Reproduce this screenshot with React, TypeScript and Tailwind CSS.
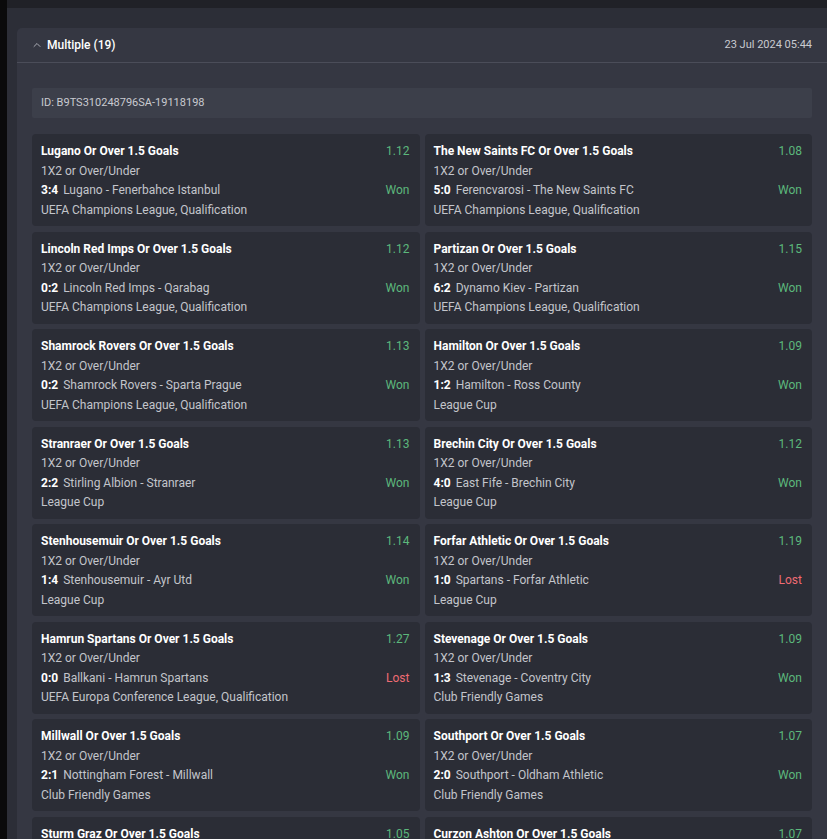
import { ChevronUp } from "lucide-react";

type Sel = {
  title: string;
  odds: string;
  score: string;
  match: string;
  league: string;
  won: boolean;
};

const UCL = "UEFA Champions League, Qualification";

const selections: Sel[] = [
  { title: "Lugano Or Over 1.5 Goals", odds: "1.12", score: "3:4", match: "Lugano - Fenerbahce Istanbul", league: UCL, won: true },
  { title: "The New Saints FC Or Over 1.5 Goals", odds: "1.08", score: "5:0", match: "Ferencvarosi - The New Saints FC", league: UCL, won: true },
  { title: "Lincoln Red Imps Or Over 1.5 Goals", odds: "1.12", score: "0:2", match: "Lincoln Red Imps - Qarabag", league: UCL, won: true },
  { title: "Partizan Or Over 1.5 Goals", odds: "1.15", score: "6:2", match: "Dynamo Kiev - Partizan", league: UCL, won: true },
  { title: "Shamrock Rovers Or Over 1.5 Goals", odds: "1.13", score: "0:2", match: "Shamrock Rovers - Sparta Prague", league: UCL, won: true },
  { title: "Hamilton Or Over 1.5 Goals", odds: "1.09", score: "1:2", match: "Hamilton - Ross County", league: "League Cup", won: true },
  { title: "Stranraer Or Over 1.5 Goals", odds: "1.13", score: "2:2", match: "Stirling Albion - Stranraer", league: "League Cup", won: true },
  { title: "Brechin City Or Over 1.5 Goals", odds: "1.12", score: "4:0", match: "East Fife - Brechin City", league: "League Cup", won: true },
  { title: "Stenhousemuir Or Over 1.5 Goals", odds: "1.14", score: "1:4", match: "Stenhousemuir - Ayr Utd", league: "League Cup", won: true },
  { title: "Forfar Athletic Or Over 1.5 Goals", odds: "1.19", score: "1:0", match: "Spartans - Forfar Athletic", league: "League Cup", won: false },
  { title: "Hamrun Spartans Or Over 1.5 Goals", odds: "1.27", score: "0:0", match: "Ballkani - Hamrun Spartans", league: "UEFA Europa Conference League, Qualification", won: false },
  { title: "Stevenage Or Over 1.5 Goals", odds: "1.09", score: "1:3", match: "Stevenage - Coventry City", league: "Club Friendly Games", won: true },
  { title: "Millwall Or Over 1.5 Goals", odds: "1.09", score: "2:1", match: "Nottingham Forest - Millwall", league: "Club Friendly Games", won: true },
  { title: "Southport Or Over 1.5 Goals", odds: "1.07", score: "2:0", match: "Southport - Oldham Athletic", league: "Club Friendly Games", won: true },
  { title: "Sturm Graz Or Over 1.5 Goals", odds: "1.05", score: "3:1", match: "Sturm Graz - Grazer AK", league: "Club Friendly Games", won: true },
  { title: "Curzon Ashton Or Over 1.5 Goals", odds: "1.07", score: "2:1", match: "Curzon Ashton - Buxton", league: "Club Friendly Games", won: true },
  { title: "Alfreton Town Or Over 1.5 Goals", odds: "1.08", score: "1:1", match: "Alfreton Town - Mansfield Town", league: "Club Friendly Games", won: true },
  { title: "Gateshead Or Over 1.5 Goals", odds: "1.06", score: "3:0", match: "Gateshead - Blyth Spartans", league: "Club Friendly Games", won: true },
  { title: "Woking Or Over 1.5 Goals", odds: "1.10", score: "2:2", match: "Woking - Crawley Town", league: "Club Friendly Games", won: true },
];

const SelectionCard = ({ s }: { s: Sel }) => (
  <div className="rounded-[4px] bg-[#2b2d36] pl-[9px] pr-[10px] pt-[8px] pb-[6px] text-[12px] leading-[19.5px] text-[#c3c5cb]">
    <div className="flex justify-between">
      <span className="font-bold text-white">{s.title}</span>
      <span className="text-[#5cb87c]">{s.odds}</span>
    </div>
    <div>1X2 or Over/Under</div>
    <div className="flex justify-between">
      <span>
        <span className="font-bold text-white mr-[5px]">{s.score}</span>
        {s.match}
      </span>
      {s.won ? (
        <span className="text-[#5cb87c]">Won</span>
      ) : (
        <span className="text-[#ef6b73]">Lost</span>
      )}
    </div>
    <div>{s.league}</div>
  </div>
);

export default function App() {
  return (
    <div
      className="flex h-[839px] w-[827px] overflow-hidden bg-[#2c2e37]"
      style={{ fontFamily: "Roboto, 'Liberation Sans', sans-serif" }}
    >
      <div className="w-[7px] shrink-0 bg-[#0a0a0b]" />
      <div className="flex min-w-0 flex-1 flex-col">
        <div className="h-[8px] shrink-0 bg-[#202127]" />
        <div className="pl-[10px] pt-[20px]">
          <div className="rounded-tl-[5px] bg-[#353742]">
            <div className="flex h-[35px] items-center justify-between border-b border-[#4b4d59] pl-[14px] pr-[15px]">
              <div className="flex items-center gap-[4px]">
                <ChevronUp size={12} strokeWidth={2} className="text-[#a9abb3]" />
                <span className="text-[12px] font-medium text-white">Multiple (19)</span>
              </div>
              <span className="text-[11px] text-[#c9cad0]">23 Jul 2024 05:44</span>
            </div>
            <div className="px-[15px] pt-[25px]">
              <div className="flex h-[30px] items-center rounded-[2px] bg-[#3c3f4a] pl-[9px] pt-[1px] text-[11px] text-[#c9cad0]">
                ID: B9TS310248796SA-19118198
              </div>
              <div className="mt-[16px] grid grid-cols-2 gap-x-[5px] gap-y-[5.5px]">
                {selections.map((s) => (
                  <SelectionCard key={s.title} s={s} />
                ))}
              </div>
            </div>
          </div>
        </div>
      </div>
    </div>
  );
}
